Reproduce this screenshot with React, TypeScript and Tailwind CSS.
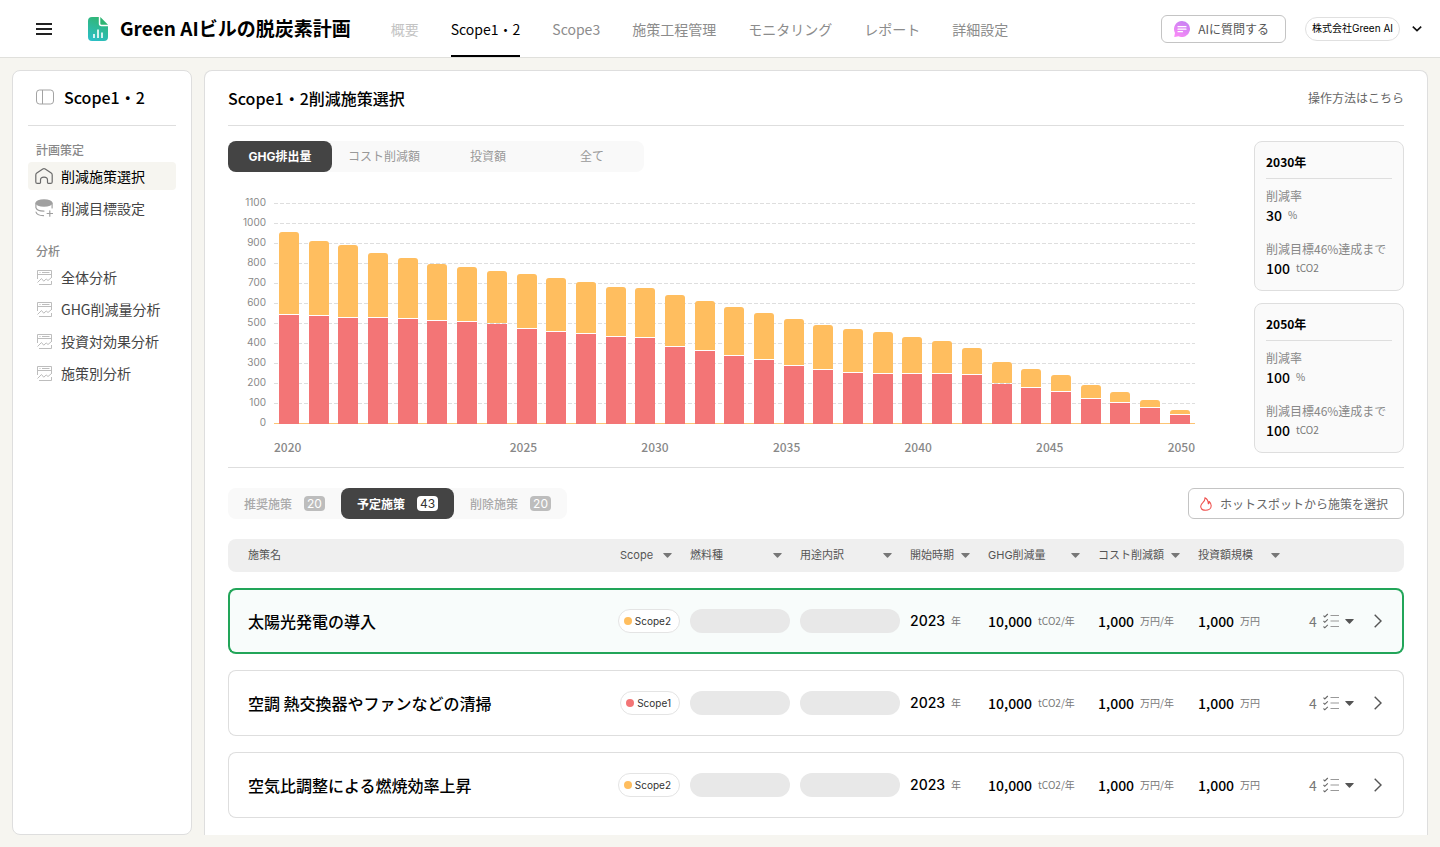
import clsx from "clsx";
import type { ReactNode } from "react";

const NAV_ITEMS = ["概要", "Scope1・2", "Scope3", "施策工程管理", "モニタリング", "レポート", "詳細設定"];

const METRIC_TABS = ["GHG排出量", "コスト削減額", "投資額", "全て"];

const PLAN_TABS = [
  { label: "推奨施策", count: 20 },
  { label: "予定施策", count: 43 },
  { label: "削除施策", count: 20 },
];

const TICKS = [1100, 1000, 900, 800, 700, 600, 500, 400, 300, 200, 100, 0];
const YEARS = [2020, 2025, 2030, 2035, 2040, 2045, 2050];

// [scope1, total] in tCO2
const EMISSIONS = [
  [540, 955], [535, 910], [525, 890], [525, 850], [520, 825], [510, 795], [505, 780], [495, 760],
  [470, 745], [455, 725], [445, 705], [430, 680], [425, 675], [380, 640], [360, 610], [335, 580],
  [315, 550], [285, 520], [265, 490], [250, 470], [245, 455], [245, 430], [245, 410], [240, 375],
  [195, 305], [175, 270], [155, 240], [120, 190], [100, 155], [75, 115], [40, 65],
];

const COLUMNS = [
  { label: "Scope", width: "w-20 pl-[10px]" },
  { label: "燃料種", width: "w-[110px]" },
  { label: "用途内訳", width: "w-[110px]" },
  { label: "開始時期", width: "w-[78px]" },
  { label: "GHG削減量", width: "w-[110px]" },
  { label: "コスト削減額", width: "w-[100px]" },
  { label: "投資額規模", width: "w-[100px]" },
];

const MEASURES = [
  { name: "太陽光発電の導入", scope: 2, selected: true },
  { name: "空調 熱交換器やファンなどの清掃", scope: 1, selected: false },
  { name: "空気比調整による燃焼効率上昇", scope: 2, selected: false },
];

const LogoIcon = () => (
  <svg width="20" height="24" viewBox="0 0 20 24" aria-hidden="true">
    <defs>
      <linearGradient id="logo" x1="14" y1="0" x2="4" y2="24" gradientUnits="userSpaceOnUse">
        <stop stopColor="#31b56f" />
        <stop offset="1" stopColor="#2bbfc8" />
      </linearGradient>
    </defs>
    <path d="M4 0h6.800v6.500a2.700 2.700 0 0 0 2.700 2.700H20V20a4 4 0 0 1-4 4H4a4 4 0 0 1-4-4V4a4 4 0 0 1 4-4Z" fill="url(#logo)" />
    <path d="M12.300 0 20 7.700h-6.400a1.300 1.300 0 0 1-1.300-1.300Z" fill="#2fb573" />
    <path d="M6 17v4M10 12.500V21M14 15.500V21" stroke="#fff" strokeWidth="1.600" />
  </svg>
);

const PanelIcon = () => (
  <svg width="18" height="16" viewBox="0 0 18 16" fill="none" stroke="#a3a3a3" aria-hidden="true">
    <rect x=".5" y="1" width="17" height="14" rx="3" />
    <path d="M6.500 1v14" />
  </svg>
);

const HomeIcon = () => (
  <svg width="18" height="18" viewBox="0 0 18 18" fill="none" stroke="#6b6b6b" strokeWidth="1.200" strokeLinejoin="round" aria-hidden="true">
    <path d="M.8 8c0-.9.300-1.400 1-1.900l6-4.100c.7-.5 1.700-.5 2.400 0l6 4.100c.7.500 1 1 1 1.900v6.900c0 .9-.6 1.500-1.500 1.500h-2.400c-.5 0-.8-.3-.8-.8v-2.500c0-1.700-1.500-3-3.500-3s-3.500 1.300-3.500 3v2.500c0 .5-.3.800-.8.800H2.300c-.9 0-1.500-.6-1.500-1.500Z" />
  </svg>
);

const DatabaseIcon = () => (
  <svg width="18" height="18" viewBox="0 0 18 18" fill="none" stroke="#a0a0a0" strokeWidth="1.200" strokeLinecap="round" aria-hidden="true">
    <ellipse cx="9" cy="4" rx="8.500" ry="3.800" fill="#a0a0a0" stroke="none" />
    <path d="M1 8.700c.4 1.900 3.800 3.400 8 3.400M1 13c.4 2 3.500 3.600 7.500 3.700M.9 4v4.700M17.100 4v5M14.800 11.800v5.400M12.100 14.500h5.400" />
  </svg>
);

const AnalysisIcon = () => (
  <svg width="15" height="15" viewBox="0 0 15 15" fill="none" stroke="#bdbdbd" aria-hidden="true">
    <path d="M.5 9V.5h14V8M.5 4.500h14M2.500 2.500h1M5 2.500h7.500" />
    <path d="M.5 12.500 4.500 8.500l2.200 2.700 2.500-2.200 1.800 1.500 3.500-3M2 14.500h12.500V11" />
  </svg>
);

const ChatIcon = () => (
  <svg width="16" height="16" viewBox="0 0 16 16" aria-hidden="true">
    <defs>
      <linearGradient id="chat" x1="12" y1="0" x2="4" y2="16" gradientUnits="userSpaceOnUse">
        <stop stopColor="#c582f3" />
        <stop offset="1" stopColor="#f98af6" />
      </linearGradient>
    </defs>
    <path d="M8 0a8 8 0 1 1-3.500 15.200L.8 16c-.5 0-.7-.4-.5-.8l.7-3.300A8 8 0 0 1 8 0Z" fill="url(#chat)" />
    <path d="M4 5.700h8M4 8.200h8M4 10.700h4.500" stroke="#fff" strokeWidth="1.200" strokeLinecap="round" />
  </svg>
);

const FlameIcon = () => (
  <svg width="12" height="14" viewBox="0 0 12 14" fill="none" stroke="#ef5350" strokeWidth="1.100" strokeLinejoin="round" aria-hidden="true">
    <path d="M4.900.8c.4 2.100-.6 3.200-1.900 4.600C1.600 6.800.7 7.900.7 9.300c0 2.500 2.200 4 5 4s5.500-1.700 5.500-4.600c0-1.700-.8-3-2-4.200.1 1.200-.2 1.900-.9 2.300C8.300 4.500 7.300 2 4.900.8Z" />
  </svg>
);

const TaskListIcon = () => (
  <svg width="16" height="16" viewBox="0 0 16 16" fill="none" aria-hidden="true">
    <path d="M.5 2.700 1.800 4l3-3M.5 8 1.800 9.300l3-3M.5 13.500l1.300 1.300 3-3" stroke="#666" strokeWidth="1.100" />
    <path d="M7.500 2.500H16M7.500 8H16M7.500 13.500H16" stroke="#999" strokeWidth="1.200" />
  </svg>
);

const Caret = ({ className }: { className?: string }) => (
  <svg width="9" height="5" viewBox="0 0 9 5" className={clsx("shrink-0", className)} aria-hidden="true">
    <path d="M.8 0h7.400c.5 0 .7.500.4.800L5 4.500c-.3.300-.7.300-1 0L.4.800C.1.500.3 0 .8 0Z" fill="currentColor" />
  </svg>
);

const Header = () => (
  <header className="flex h-[58px] items-center border-b border-[#e0e0dc] bg-white pr-[18px] pl-9">
    <button type="button" aria-label="メニュー" className="flex w-4 flex-col gap-[3px]">
      <span className="h-[2px] bg-[#222]" />
      <span className="h-[2px] bg-[#222]" />
      <span className="h-[2px] bg-[#222]" />
    </button>
    <div className="ml-9 flex items-center gap-3">
      <LogoIcon />
      <h1 className="text-[19px] font-bold whitespace-nowrap">Green AIビルの脱炭素計画</h1>
    </div>
    <nav className="ml-10 flex gap-8 self-stretch text-sm whitespace-nowrap text-[#8c8c8c]">
      {NAV_ITEMS.map((item, i) => (
        <a
          key={item}
          href="#"
          className={clsx(
            "flex items-center",
            i === 0 && "text-[#c4c4c4]",
            i === 1 && "border-b-2 border-black pt-[2px] text-black",
          )}
        >
          {item}
        </a>
      ))}
    </nav>
    <button type="button" className="ml-auto flex h-7 items-center gap-2 rounded-md border border-[#c4c4c4] px-3 pr-4 text-xs whitespace-nowrap text-[#555]">
      <ChatIcon />
      AIに質問する
    </button>
    <button type="button" className="ml-[19px] flex items-center gap-3 whitespace-nowrap">
      <span className="flex h-6 items-center rounded-full border border-[#e0e0e0] px-[6px] font-['Inter','Noto_Sans_CJK_JP',sans-serif] text-[10px]">
        株式会社Green AI
      </span>
      <svg width="10" height="6" viewBox="0 0 10 6" fill="none" stroke="#111" strokeWidth="1.600" aria-hidden="true">
        <path d="m.8.700 4.200 4L9.200.700" />
      </svg>
    </button>
  </header>
);

const SideItem = ({ icon, label, active }: { icon: ReactNode; label: string; active?: boolean }) => (
  <a
    href="#"
    className={clsx("flex h-7 items-center gap-2 rounded pl-[7px] text-sm", active ? "bg-[#f6f5f0] text-black" : "text-[#444]")}
  >
    <span className="flex w-[18px] justify-center">{icon}</span>
    {label}
  </a>
);

const Sidebar = () => (
  <aside className="w-[180px] shrink-0 rounded-lg border border-[#dedede] bg-white px-[15px]">
    <div className="flex h-[55px] items-center gap-[10px] border-b border-[#dedede] pb-[2px] pl-2 font-medium">
      <PanelIcon />
      Scope1・2
    </div>
    <h2 className="mt-[15px] mb-[3px] pl-2 text-xs leading-[18px] font-medium text-[#888]">計画策定</h2>
    <nav className="flex flex-col gap-1">
      <SideItem icon={<HomeIcon />} label="削減施策選択" active />
      <SideItem icon={<DatabaseIcon />} label="削減目標設定" />
    </nav>
    <h2 className="mt-5 mb-[3px] pl-2 text-xs leading-[18px] font-medium text-[#888]">分析</h2>
    <nav className="flex flex-col gap-1">
      <SideItem icon={<AnalysisIcon />} label="全体分析" />
      <SideItem icon={<AnalysisIcon />} label="GHG削減量分析" />
      <SideItem icon={<AnalysisIcon />} label="投資対効果分析" />
      <SideItem icon={<AnalysisIcon />} label="施策別分析" />
    </nav>
  </aside>
);

const EmissionsChart = () => (
  <div className="mt-5">
    <div className="flex">
      <div className="flex w-[38px] flex-col text-right font-['Inter','Noto_Sans_CJK_JP',sans-serif] text-[10px] leading-5 text-[#888]">
        {TICKS.map((tick) => (
          <span key={tick}>{tick}</span>
        ))}
      </div>
      <div className="relative mt-[11px] ml-2 h-[221px] flex-1">
        <div className="flex flex-col gap-[19px]">
          {TICKS.map((tick) => (
            <div
              key={tick}
              className={clsx(
                "h-px",
                tick === 0 ? "bg-[#fdc474]" : "bg-[repeating-linear-gradient(90deg,#dedede_0_4px,transparent_4px_6px)]",
              )}
            />
          ))}
        </div>
        {/* bars sit over the grid lines, 100 t = 20px */}
        <div className="absolute inset-0 flex items-end justify-between px-[5px]">
          {EMISSIONS.map(([scope1, total], i) => (
            <div key={i} className="flex w-5 flex-col gap-px">
              <div className="rounded-t-[3px] bg-[#ffbe5f]" style={{ height: (total - scope1) / 5 - 1 }} />
              <div className="bg-[#f37576]" style={{ height: scope1 / 5 + 1 }} />
            </div>
          ))}
        </div>
      </div>
    </div>
    <div className="mt-[5px] ml-[46px] flex text-xs leading-5 font-medium text-[#888]">
      {YEARS.map((year) => (
        <span key={year} className="shrink-0 grow basis-auto first:grow-[2] last:grow-0">
          {year}
        </span>
      ))}
    </div>
  </div>
);

const Stat = ({ label, value, unit }: { label: string; value: string; unit: string }) => (
  <div>
    <p className="text-xs leading-[18px] whitespace-nowrap text-[#888]">{label}</p>
    <p className="flex items-center gap-[6px] text-sm leading-5 font-medium">
      {value}
      <span className="text-[10px] leading-5 font-normal text-[#777]">{unit}</span>
    </p>
  </div>
);

const TargetCard = ({ year, rate }: { year: string; rate: string }) => (
  <section className="rounded-lg border border-[#dedede] bg-[#fafafa] px-[11px] pt-[10px] pb-3">
    <h3 className="border-b border-[#dedede] pb-[6px] text-xs leading-5 font-bold">{year}</h3>
    <div className="flex flex-col gap-[15px] pt-2">
      <Stat label="削減率" value={rate} unit="%" />
      <Stat label="削減目標46%達成まで" value="100" unit="tCO2" />
    </div>
  </section>
);

const Amount = ({ value, unit }: { value: string; unit: string }) => (
  <span className="flex items-center gap-[6px] text-sm leading-5 font-medium whitespace-nowrap">
    {value}
    <span className="text-[10px] leading-5 font-normal text-[#777]">{unit}</span>
  </span>
);

const MeasureRow = ({ name, scope, selected }: { name: string; scope: number; selected: boolean }) => {
  const cell = clsx("h-[66px]", selected ? "border-y-2 border-[#22a559] bg-[#f8fcfb]" : "border-y border-[#dedede]");
  return (
    <tr>
      <td
        className={clsx(
          cell,
          "rounded-l-lg text-base font-medium whitespace-nowrap",
          selected ? "border-l-2 pl-[18px]" : "border-l pl-[19px]",
        )}
      >
        {name}
      </td>
      <td className={clsx(cell, "pr-[10px]")}>
        <span className="ml-auto flex h-6 w-fit items-center gap-[3px] rounded-full border border-[#e4e4e4] bg-white pr-2 pl-[5px] font-['Inter','Noto_Sans_CJK_JP',sans-serif] text-[10px] text-[#333]">
          <span className={clsx("size-2 rounded-full", scope === 1 ? "bg-[#f37576]" : "bg-[#ffbe5f]")} />
          Scope{scope}
        </span>
      </td>
      <td className={cell}>
        <div className="h-6 w-[100px] rounded-full bg-[#e8e8e8]" />
      </td>
      <td className={cell}>
        <div className="h-6 w-[100px] rounded-full bg-[#e8e8e8]" />
      </td>
      <td className={clsx(cell, "font-['Inter','Noto_Sans_CJK_JP',sans-serif]")}>
        <Amount value="2023" unit="年" />
      </td>
      <td className={cell}>
        <Amount value="10,000" unit="tCO2/年" />
      </td>
      <td className={cell}>
        <Amount value="1,000" unit="万円/年" />
      </td>
      <td className={cell}>
        <Amount value="1,000" unit="万円" />
      </td>
      <td className={clsx(cell, "rounded-r-lg pl-[11px]", selected ? "border-r-2" : "border-r")}>
        <div className="flex items-center text-sm text-[#777]">
          <button type="button" aria-label="タスクを開く" className="flex items-center gap-[6px]">
            4
            <TaskListIcon />
            <Caret className="text-[#555]" />
          </button>
          <button type="button" aria-label="詳細" className="ml-5">
            <svg width="8" height="14" viewBox="0 0 8 14" fill="none" stroke="#555" strokeWidth="1.400" aria-hidden="true">
              <path d="m.7.700 6.300 6.300-6.300 6.300" />
            </svg>
          </button>
        </div>
      </td>
    </tr>
  );
};

export default function App() {
  return (
    <div className="flex min-h-screen flex-col bg-[#f6f5f0] font-['Noto_Sans_CJK_JP',sans-serif] text-black">
      <Header />
      <div className="flex flex-1 gap-3 p-3">
        <Sidebar />
        <main className="min-w-0 flex-1 rounded-t-lg border border-b-0 border-[#dedede] bg-white px-[23px]">
          <div className="flex h-[55px] items-center justify-between border-b border-[#dedede]">
            <h2 className="font-medium">Scope1・2削減施策選択</h2>
            <a href="#" className="text-xs text-[#666]">
              操作方法はこちら
            </a>
          </div>

          <section className="flex items-start gap-[59px] border-b border-[#dedede] pt-[15px] pb-[10px]">
            <div className="min-w-0 flex-1">
              <div className="flex h-[31px] w-fit rounded-lg bg-[#f9f9f9] font-['Inter','Noto_Sans_CJK_JP',sans-serif] text-xs">
                {METRIC_TABS.map((tab, i) => (
                  <button
                    key={tab}
                    type="button"
                    className={clsx("w-[104px] rounded-lg", i === 0 ? "bg-[#444] font-bold text-white" : "text-[#999]")}
                  >
                    {tab}
                  </button>
                ))}
              </div>
              <EmissionsChart />
            </div>
            <div className="flex w-[150px] shrink-0 flex-col gap-3">
              <TargetCard year="2030年" rate="30" />
              <TargetCard year="2050年" rate="100" />
            </div>
          </section>

          <div className="mt-5 flex items-center justify-between">
            <div className="flex h-[31px] rounded-lg bg-[#f9f9f9] text-xs font-medium">
              {PLAN_TABS.map(({ label, count }, i) => (
                <button
                  key={label}
                  type="button"
                  className={clsx(
                    "flex items-center gap-3 rounded-lg px-4",
                    i === 1 ? "bg-[#444] font-bold text-white" : "text-[#aaa]",
                  )}
                >
                  {label}
                  <span
                    className={clsx(
                      "rounded px-[3px] font-['Inter',sans-serif] leading-[15px] font-normal",
                      i === 1 ? "bg-white text-[#333]" : "bg-[#bdbdbd] text-white",
                    )}
                  >
                    {count}
                  </span>
                </button>
              ))}
            </div>
            <button type="button" className="flex h-[31px] items-center gap-2 rounded-md border border-[#c4c4c4] px-[11px] pr-[15px] text-xs text-[#666]">
              <FlameIcon />
              ホットスポットから施策を選択
            </button>
          </div>

          <table className="mt-1 w-full table-fixed border-separate border-spacing-x-0 border-spacing-y-4">
            <thead>
              <tr className="font-['Inter','Noto_Sans_CJK_JP',sans-serif] text-[11px] text-[#555]">
                <th className="h-[33px] rounded-l-lg bg-[#efefef] pl-5 text-left font-normal">施策名</th>
                {COLUMNS.map(({ label, width }) => (
                  <th key={label} className={clsx("bg-[#efefef] pr-[18px] font-normal", width)}>
                    <button type="button" className="flex w-full items-center justify-between whitespace-nowrap">
                      {label}
                      <Caret className="text-[#777]" />
                    </button>
                  </th>
                ))}
                <th className="w-[106px] rounded-r-lg bg-[#efefef]" />
              </tr>
            </thead>
            <tbody>
              {MEASURES.map((measure) => (
                <MeasureRow key={measure.name} {...measure} />
              ))}
            </tbody>
          </table>
        </main>
      </div>
    </div>
  );
}
